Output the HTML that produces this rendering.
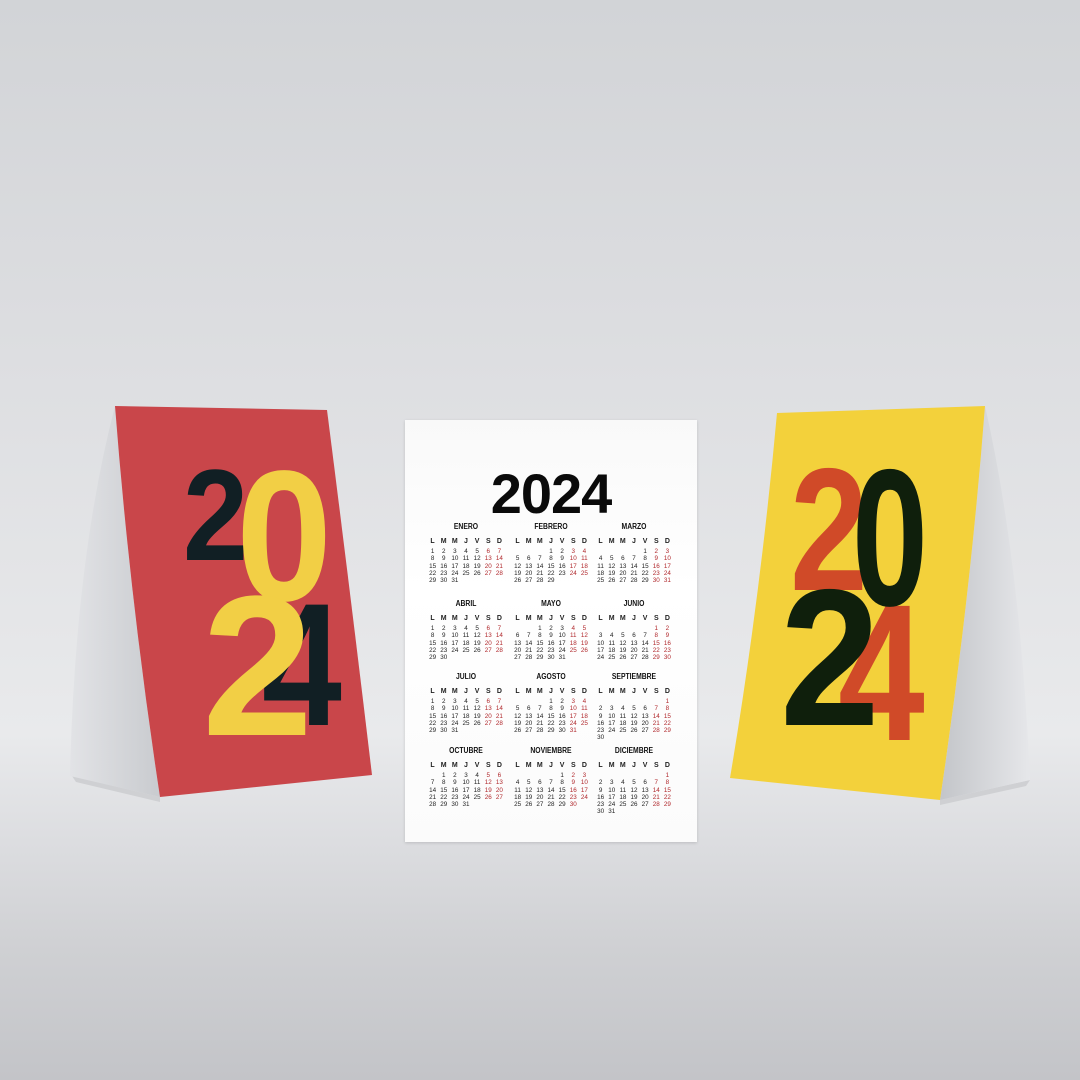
<!DOCTYPE html>
<html><head><meta charset="utf-8"><style>
html,body{margin:0;padding:0}
body{width:1080px;height:1080px;position:relative;overflow:hidden;
background:linear-gradient(180deg,#d2d4d7 0%,#dcdde0 30%,#e6e7e9 60%,#e9eaec 68%,#dcdde0 78%,#cfd0d3 88%,#c3c4c8 100%);
font-family:"Liberation Sans",sans-serif}
svg{position:absolute;left:0;top:0}
.cal{position:absolute;left:405px;top:420px;width:292px;height:422px;background:linear-gradient(180deg,#f9f9f9,#ffffff 40%,#fbfbfb);box-shadow:0 1px 3px rgba(0,0,0,.15)}
.yr{position:absolute;left:405px;top:464px;width:292px;text-align:center;font-weight:bold;font-size:56px;line-height:60px;color:#0a0a0a;letter-spacing:-1px}
.m{position:absolute;width:78px;font-size:6.3px;color:#222}
.m .n{height:10px;line-height:10px;text-align:center;font-weight:bold;font-size:8px;transform:scaleX(.85);color:#111}
.m .h{display:grid;grid-template-columns:repeat(7,1fr);margin-top:6px;line-height:8px;text-align:center;font-size:7px}
.m .g{display:grid;grid-template-columns:repeat(7,1fr);margin-top:2px;line-height:7.3px;text-align:center}
.m .g i{font-style:normal}
.m .g i:nth-child(7n+6),.m .g i:nth-child(7n){color:#b0282c}
</style></head><body>
<svg width="1080" height="1080" viewBox="0 0 1080 1080">
<defs>
<linearGradient id="ws" x1="0" x2="1"><stop offset="0" stop-color="#e2e3e6"/><stop offset="1" stop-color="#c9cbcf"/></linearGradient>
<linearGradient id="ws2" x1="0" x2="1"><stop offset="0" stop-color="#c3c5c9"/><stop offset="1" stop-color="#e6e7ea"/></linearGradient>
</defs>
<path d="M72,776 L160,797 L160,802 L76,782 Z" fill="#cfd0d3"/>
<path d="M115,406 Q75,560 70,776 L160,797 Q130,600 115,406 Z" fill="url(#ws)"/>
<path d="M115,406 L327,410 Q350,590 372,775 L160,797 Q130,600 115,406 Z" fill="#c9464a"/>
<g font-family="Liberation Sans" font-weight="bold">
<text transform="translate(183,560) scale(0.9,1)" font-size="130" fill="#111f24">2</text>
<text transform="translate(262,725) scale(0.82,1)" font-size="175" fill="#111f24">4</text>
<text transform="translate(236,600) scale(0.93,1)" font-size="186" fill="#f2cf45">0</text>
<text transform="translate(202,735)" font-size="200" fill="#f2cf45">2</text>
</g>
<path d="M940,800 L1030,780 L1026,786 L940,805 Z" fill="#cfd0d3"/>
<path d="M985,406 Q1020,560 1030,780 L940,800 Q970,600 985,406 Z" fill="url(#ws2)"/>
<path d="M777,413 L985,406 Q970,600 940,800 L730,778 Q760,600 777,413 Z" fill="#f3d13b"/>
<g font-family="Liberation Sans" font-weight="bold">
<text transform="translate(838,740) scale(0.8,1)" font-size="195" fill="#d04a28">4</text>
<text transform="translate(790,590) scale(0.8,1)" font-size="175" fill="#d04a28">2</text>
<text transform="translate(852,605) scale(0.7,1)" font-size="195" fill="#0f1f0c">0</text>
<text transform="translate(780,725) scale(0.92,1)" font-size="195" fill="#0f1f0c">2</text>
</g>
</svg>
<div class="cal"></div>
<div class="yr">2024</div>

<div class="m" style="left:427px;top:522px"><div class="n">ENERO</div><div class="h"><b>L</b><b>M</b><b>M</b><b>J</b><b>V</b><b>S</b><b>D</b></div><div class="g"><i>1</i><i>2</i><i>3</i><i>4</i><i>5</i><i>6</i><i>7</i><i>8</i><i>9</i><i>10</i><i>11</i><i>12</i><i>13</i><i>14</i><i>15</i><i>16</i><i>17</i><i>18</i><i>19</i><i>20</i><i>21</i><i>22</i><i>23</i><i>24</i><i>25</i><i>26</i><i>27</i><i>28</i><i>29</i><i>30</i><i>31</i></div></div>

<div class="m" style="left:512px;top:522px"><div class="n">FEBRERO</div><div class="h"><b>L</b><b>M</b><b>M</b><b>J</b><b>V</b><b>S</b><b>D</b></div><div class="g"><i></i><i></i><i></i><i>1</i><i>2</i><i>3</i><i>4</i><i>5</i><i>6</i><i>7</i><i>8</i><i>9</i><i>10</i><i>11</i><i>12</i><i>13</i><i>14</i><i>15</i><i>16</i><i>17</i><i>18</i><i>19</i><i>20</i><i>21</i><i>22</i><i>23</i><i>24</i><i>25</i><i>26</i><i>27</i><i>28</i><i>29</i></div></div>

<div class="m" style="left:595px;top:522px"><div class="n">MARZO</div><div class="h"><b>L</b><b>M</b><b>M</b><b>J</b><b>V</b><b>S</b><b>D</b></div><div class="g"><i></i><i></i><i></i><i></i><i>1</i><i>2</i><i>3</i><i>4</i><i>5</i><i>6</i><i>7</i><i>8</i><i>9</i><i>10</i><i>11</i><i>12</i><i>13</i><i>14</i><i>15</i><i>16</i><i>17</i><i>18</i><i>19</i><i>20</i><i>21</i><i>22</i><i>23</i><i>24</i><i>25</i><i>26</i><i>27</i><i>28</i><i>29</i><i>30</i><i>31</i></div></div>

<div class="m" style="left:427px;top:599px"><div class="n">ABRIL</div><div class="h"><b>L</b><b>M</b><b>M</b><b>J</b><b>V</b><b>S</b><b>D</b></div><div class="g"><i>1</i><i>2</i><i>3</i><i>4</i><i>5</i><i>6</i><i>7</i><i>8</i><i>9</i><i>10</i><i>11</i><i>12</i><i>13</i><i>14</i><i>15</i><i>16</i><i>17</i><i>18</i><i>19</i><i>20</i><i>21</i><i>22</i><i>23</i><i>24</i><i>25</i><i>26</i><i>27</i><i>28</i><i>29</i><i>30</i></div></div>

<div class="m" style="left:512px;top:599px"><div class="n">MAYO</div><div class="h"><b>L</b><b>M</b><b>M</b><b>J</b><b>V</b><b>S</b><b>D</b></div><div class="g"><i></i><i></i><i>1</i><i>2</i><i>3</i><i>4</i><i>5</i><i>6</i><i>7</i><i>8</i><i>9</i><i>10</i><i>11</i><i>12</i><i>13</i><i>14</i><i>15</i><i>16</i><i>17</i><i>18</i><i>19</i><i>20</i><i>21</i><i>22</i><i>23</i><i>24</i><i>25</i><i>26</i><i>27</i><i>28</i><i>29</i><i>30</i><i>31</i></div></div>

<div class="m" style="left:595px;top:599px"><div class="n">JUNIO</div><div class="h"><b>L</b><b>M</b><b>M</b><b>J</b><b>V</b><b>S</b><b>D</b></div><div class="g"><i></i><i></i><i></i><i></i><i></i><i>1</i><i>2</i><i>3</i><i>4</i><i>5</i><i>6</i><i>7</i><i>8</i><i>9</i><i>10</i><i>11</i><i>12</i><i>13</i><i>14</i><i>15</i><i>16</i><i>17</i><i>18</i><i>19</i><i>20</i><i>21</i><i>22</i><i>23</i><i>24</i><i>25</i><i>26</i><i>27</i><i>28</i><i>29</i><i>30</i></div></div>

<div class="m" style="left:427px;top:672px"><div class="n">JULIO</div><div class="h"><b>L</b><b>M</b><b>M</b><b>J</b><b>V</b><b>S</b><b>D</b></div><div class="g"><i>1</i><i>2</i><i>3</i><i>4</i><i>5</i><i>6</i><i>7</i><i>8</i><i>9</i><i>10</i><i>11</i><i>12</i><i>13</i><i>14</i><i>15</i><i>16</i><i>17</i><i>18</i><i>19</i><i>20</i><i>21</i><i>22</i><i>23</i><i>24</i><i>25</i><i>26</i><i>27</i><i>28</i><i>29</i><i>30</i><i>31</i></div></div>

<div class="m" style="left:512px;top:672px"><div class="n">AGOSTO</div><div class="h"><b>L</b><b>M</b><b>M</b><b>J</b><b>V</b><b>S</b><b>D</b></div><div class="g"><i></i><i></i><i></i><i>1</i><i>2</i><i>3</i><i>4</i><i>5</i><i>6</i><i>7</i><i>8</i><i>9</i><i>10</i><i>11</i><i>12</i><i>13</i><i>14</i><i>15</i><i>16</i><i>17</i><i>18</i><i>19</i><i>20</i><i>21</i><i>22</i><i>23</i><i>24</i><i>25</i><i>26</i><i>27</i><i>28</i><i>29</i><i>30</i><i>31</i></div></div>

<div class="m" style="left:595px;top:672px"><div class="n">SEPTIEMBRE</div><div class="h"><b>L</b><b>M</b><b>M</b><b>J</b><b>V</b><b>S</b><b>D</b></div><div class="g"><i></i><i></i><i></i><i></i><i></i><i></i><i>1</i><i>2</i><i>3</i><i>4</i><i>5</i><i>6</i><i>7</i><i>8</i><i>9</i><i>10</i><i>11</i><i>12</i><i>13</i><i>14</i><i>15</i><i>16</i><i>17</i><i>18</i><i>19</i><i>20</i><i>21</i><i>22</i><i>23</i><i>24</i><i>25</i><i>26</i><i>27</i><i>28</i><i>29</i><i>30</i></div></div>

<div class="m" style="left:427px;top:746px"><div class="n">OCTUBRE</div><div class="h"><b>L</b><b>M</b><b>M</b><b>J</b><b>V</b><b>S</b><b>D</b></div><div class="g"><i></i><i>1</i><i>2</i><i>3</i><i>4</i><i>5</i><i>6</i><i>7</i><i>8</i><i>9</i><i>10</i><i>11</i><i>12</i><i>13</i><i>14</i><i>15</i><i>16</i><i>17</i><i>18</i><i>19</i><i>20</i><i>21</i><i>22</i><i>23</i><i>24</i><i>25</i><i>26</i><i>27</i><i>28</i><i>29</i><i>30</i><i>31</i></div></div>

<div class="m" style="left:512px;top:746px"><div class="n">NOVIEMBRE</div><div class="h"><b>L</b><b>M</b><b>M</b><b>J</b><b>V</b><b>S</b><b>D</b></div><div class="g"><i></i><i></i><i></i><i></i><i>1</i><i>2</i><i>3</i><i>4</i><i>5</i><i>6</i><i>7</i><i>8</i><i>9</i><i>10</i><i>11</i><i>12</i><i>13</i><i>14</i><i>15</i><i>16</i><i>17</i><i>18</i><i>19</i><i>20</i><i>21</i><i>22</i><i>23</i><i>24</i><i>25</i><i>26</i><i>27</i><i>28</i><i>29</i><i>30</i></div></div>

<div class="m" style="left:595px;top:746px"><div class="n">DICIEMBRE</div><div class="h"><b>L</b><b>M</b><b>M</b><b>J</b><b>V</b><b>S</b><b>D</b></div><div class="g"><i></i><i></i><i></i><i></i><i></i><i></i><i>1</i><i>2</i><i>3</i><i>4</i><i>5</i><i>6</i><i>7</i><i>8</i><i>9</i><i>10</i><i>11</i><i>12</i><i>13</i><i>14</i><i>15</i><i>16</i><i>17</i><i>18</i><i>19</i><i>20</i><i>21</i><i>22</i><i>23</i><i>24</i><i>25</i><i>26</i><i>27</i><i>28</i><i>29</i><i>30</i><i>31</i></div></div>
</body></html>
